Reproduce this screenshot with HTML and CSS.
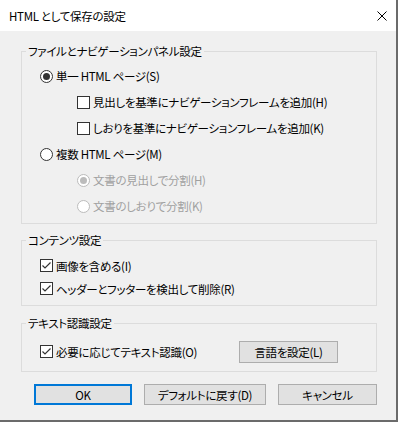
FILE: index.html
```html
<!DOCTYPE html>
<html lang="ja">
<head>
<meta charset="utf-8">
<title>HTML として保存の設定</title>
<link rel="stylesheet" href="styles.css">
</head>
<body>
<div class="window">
  <div class="titlebar">
    <span class="title">HTML として保存の設定</span>
    <svg class="close" width="10" height="10" viewBox="0 0 10 10"><path d="M0.5 0.5 L9.5 9.5 M9.5 0.5 L0.5 9.5" stroke="#000" stroke-width="1" fill="none"/></svg>
  </div>

  <fieldset class="group g1">
    <legend>ファイルとナビゲーションパネル設定</legend>
    <div class="row l1"><span class="radio on"></span><span>単一 HTML ページ(S)</span></div>
    <div class="row l2"><svg class="check" width="13" height="13" viewBox="0 0 13 13"><rect x="0.5" y="0.5" width="12" height="12" fill="#fff" stroke="#333"/></svg><span>見出しを基準にナビゲーションフレームを追加(H)</span></div>
    <div class="row l2"><svg class="check" width="13" height="13" viewBox="0 0 13 13"><rect x="0.5" y="0.5" width="12" height="12" fill="#fff" stroke="#333"/></svg><span>しおりを基準にナビゲーションフレームを追加(K)</span></div>
    <div class="row l1"><span class="radio"></span><span>複数 HTML ページ(M)</span></div>
    <div class="row l2 disabled"><span class="radio on"></span><span>文書の見出しで分割(H)</span></div>
    <div class="row l2 disabled"><span class="radio"></span><span>文書のしおりで分割(K)</span></div>
  </fieldset>

  <fieldset class="group g2">
    <legend>コンテンツ設定</legend>
    <div class="row l1"><svg class="check" width="13" height="13" viewBox="0 0 13 13"><rect x="0.5" y="0.5" width="12" height="12" fill="#fff" stroke="#333"/><path d="M2.5 6.5 L5 9 L10.5 3.5" fill="none" stroke="#333" stroke-width="1.2"/></svg><span>画像を含める(I)</span></div>
    <div class="row l1"><svg class="check" width="13" height="13" viewBox="0 0 13 13"><rect x="0.5" y="0.5" width="12" height="12" fill="#fff" stroke="#333"/><path d="M2.5 6.5 L5 9 L10.5 3.5" fill="none" stroke="#333" stroke-width="1.2"/></svg><span>ヘッダーとフッターを検出して削除(R)</span></div>
  </fieldset>

  <fieldset class="group g3">
    <legend>テキスト認識設定</legend>
    <div class="row l1 ocr">
      <svg class="check" width="13" height="13" viewBox="0 0 13 13"><rect x="0.5" y="0.5" width="12" height="12" fill="#fff" stroke="#333"/><path d="M2.5 6.5 L5 9 L10.5 3.5" fill="none" stroke="#333" stroke-width="1.2"/></svg><span>必要に応じてテキスト認識(O)</span>
      <button class="btn lang">言語を設定(L)</button>
    </div>
  </fieldset>

  <div class="actions">
    <button class="btn ok">OK</button>
    <button class="btn def">デフォルトに戻す(D)</button>
    <button class="btn cancel">キャンセル</button>
  </div>
</div>
</body>
</html>
```

FILE: styles.css
```css
* { box-sizing: border-box; }
html, body { margin: 0; padding: 0; }
body {
  font-family: "Noto Sans CJK JP", sans-serif;
  font-size: 11.5px;
  letter-spacing: -0.3px;
  color: #000;
  font-feature-settings: "palt";
  background: #f0f0f0;
}
.window {
  width: 398px;
  height: 422px;
  background: #f0f0f0;
  border-right: 2px solid #6b6b6b;
  border-bottom: 2px solid #6b6b6b;
  display: flex;
  flex-direction: column;
}
.titlebar {
  height: 31px;
  flex-shrink: 0;
  background: #fff;
  display: flex;
  align-items: center;
  padding: 0 9px;
}
.close { margin-left: auto; }

.group {
  margin: 0 0 0 21px;
  width: 356px;
  min-width: 0;
  padding: 0;
  border: 1px solid #dcdcdc;
}
.group legend {
  margin-left: 4px;
  padding: 0 2px;
  height: 16px;
  line-height: 16px;
}
.g1 { margin-top: 12px; padding: 4px 0 4px; }
.g2 { margin-top: 8px; padding: 6px 0 5px; }
.g3 { margin-top: 9px; padding: 10px 0 9px; }

.row {
  display: flex;
  align-items: center;
  height: 26px;
  gap: 3px;
  white-space: nowrap;
}
.g2 .row { height: 23px; }
.g3 .row { height: 21px; }
.l1 { padding-left: 18px; }
.l2 { padding-left: 55px; }

.check { flex-shrink: 0; }
.radio {
  width: 13px;
  height: 13px;
  flex-shrink: 0;
  border: 1px solid #333;
  border-radius: 50%;
  background: #fff;
  display: flex;
  align-items: center;
  justify-content: center;
}
.radio.on::after {
  content: "";
  width: 7px;
  height: 7px;
  border-radius: 50%;
  background: #333;
}
.disabled { color: #a0a0a0; }
.disabled .radio { border-color: #bcbcbc; }
.disabled .radio.on::after { background: #bcbcbc; }

.btn {
  font: inherit;
  letter-spacing: inherit;
  color: #000;
  height: 21px;
  padding: 0;
  border: 1px solid #adadad;
  background: #e1e1e1;
  display: flex;
  align-items: center;
  justify-content: center;
  white-space: nowrap;
}
.lang { width: 99px; height: 22px; margin-left: auto; margin-right: 38px; }

.actions {
  display: flex;
  gap: 12px;
  margin-top: 12px;
  padding-left: 34px;
}
.ok { width: 98px; border: 2px solid #0078d7; }
.def { width: 122px; }
.cancel { width: 99px; }
```
